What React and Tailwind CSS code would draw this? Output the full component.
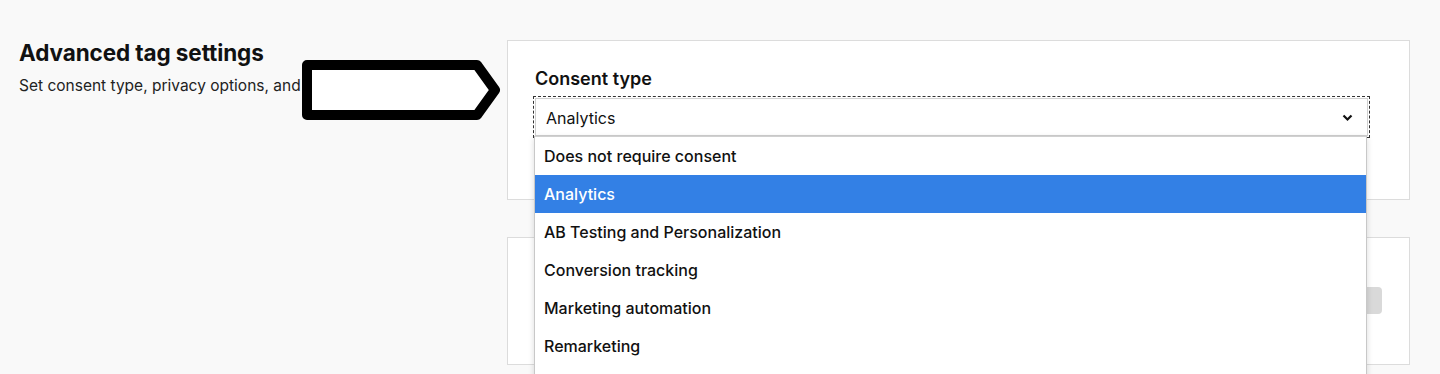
import React from 'react';

const options = [
  'Does not require consent',
  'Analytics',
  'AB Testing and Personalization',
  'Conversion tracking',
  'Marketing automation',
  'Remarketing',
];

export default function App() {
  const selected = 'Analytics';

  return (
    <div className="relative h-[374px] w-[1440px] overflow-hidden bg-[#f9f9f9] font-['Inter',sans-serif] text-[#111]">
      <div className="flex">
        {/* Left intro column */}
        <div className="w-[507px] pl-[19px] pt-[38px]">
          <h2 className="text-[22.5px] font-bold leading-[30px] tracking-[-0.1px]">Advanced tag settings</h2>
          <p className="mt-[8px] text-[15.5px] leading-[20px] text-[#222]">
            Set consent type, privacy options, and other advanced settings
          </p>
        </div>

        {/* Right column with cards */}
        <div className="flex w-[903px] flex-col gap-[37px] pt-[40px]">
          <div className="h-[160px] border border-[#dcdcdc] bg-white pl-[27px] pr-[41px] pt-[25px]">
            <div className="text-[18px] font-semibold leading-[26px]">Consent type</div>
            <div className="mt-[6px] outline-1 outline-dashed outline-[#333] outline-offset-[1px]">
              <div className="flex h-[38px] items-center justify-between border border-[#cfcfcf] bg-white pl-[10px] pr-[14px] pt-[2px] text-[16px]">
                <span>{selected}</span>
                <svg width="11" height="8" viewBox="0 0 11 8">
                  <polyline points="1.5,1.5 5.5,5.5 9.5,1.5" fill="none" stroke="#111" strokeWidth="2.2" />
                </svg>
              </div>
            </div>
          </div>

          <div className="flex h-[128px] items-start justify-end border border-[#dcdcdc] bg-white pr-[27px] pt-[49px]">
            <div className="h-[27px] w-[140px] rounded-[4px] bg-[#d9d9d9]" />
          </div>
        </div>
      </div>

      {/* Open dropdown list */}
      <div className="absolute left-[534px] top-[136px] w-[833px] border-x border-[#c8c8c8] bg-white pb-[40px] shadow-[0_2px_6px_rgba(0,0,0,0.15)]">
        <div className="h-px bg-[#d0d0d0]" />
        {options.map((o) => (
          <div
            key={o}
            className={
              o === selected
                ? 'flex h-[38px] items-center bg-[#3380e5] pl-[9px] text-[16px] font-medium text-white'
                : 'flex h-[38px] items-center pl-[9px] text-[16px] font-medium text-[#111]'
            }
          >
            {o}
          </div>
        ))}
      </div>

      {/* Annotation arrow */}
      <svg className="absolute left-[297px] top-[55px]" width="210" height="70" viewBox="0 0 210 70">
        <path
          d="M10 10 H180 L198 35 L180 60 H10 Z"
          fill="#fff"
          stroke="#000"
          strokeWidth="10"
          strokeLinejoin="round"
        />
      </svg>
    </div>
  );
}
